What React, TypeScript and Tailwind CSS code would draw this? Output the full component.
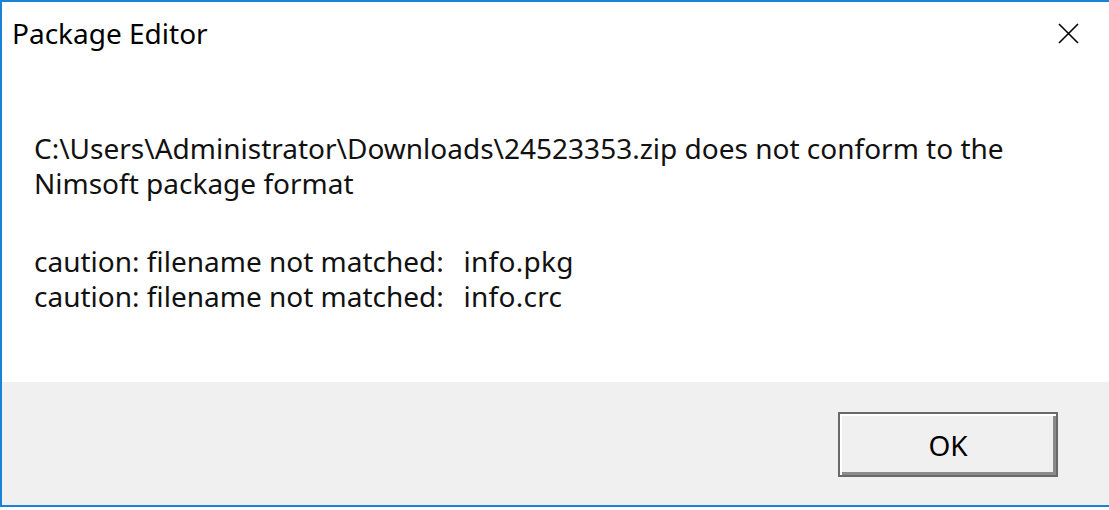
import React from 'react';

const font = { fontFamily: '"Noto Sans", "Open Sans", sans-serif' };

function CloseIcon() {
  return (
    <svg width="21" height="21" viewBox="0 0 21 21" className="text-black">
      <path d="M1 1 L20 20 M20 1 L1 20" stroke="currentColor" strokeWidth="1.6" fill="none" />
    </svg>
  );
}

export default function App() {
  return (
    <div className="w-[1109px] h-[510px] bg-white overflow-hidden" style={font}>
      <div className="flex flex-col h-[507px] border-t-2 border-l-2 border-b-2 border-[#1883d7] bg-white">
        {/* title bar */}
        <div className="flex items-center justify-between h-[62px] pl-[10px] pr-[30px]">
          <span className="text-[28px] text-black">Package Editor</span>
          <CloseIcon />
        </div>

        {/* message */}
        <div className="h-[318px] pl-[32px] pt-[67px] text-[28px] leading-[35px] text-[#111]">
          <p>C:\Users\Administrator\Downloads\24523353.zip does not conform to the</p>
          <p>Nimsoft package format</p>
          <p className="h-[43px]" />
          <p>caution: filename not matched:&nbsp; <span className="ml-[5px] tracking-[0.3px]">info.pkg</span></p>
          <p>caution: filename not matched:&nbsp; <span className="ml-[5px] tracking-[0.3px]">info.crc</span></p>
        </div>

        {/* footer */}
        <div className="flex-1 bg-[#f0f0f0] flex justify-end items-start pt-[30px] pr-[51px]">
          <button className="w-[220px] h-[65px] bg-[#f0f0f0] border-2 border-[#696969] shadow-[inset_2px_2px_0_#ffffff,inset_-3px_-3px_0_#8a8a8a] text-[28px] text-black">
            OK
          </button>
        </div>
      </div>
    </div>
  );
}
